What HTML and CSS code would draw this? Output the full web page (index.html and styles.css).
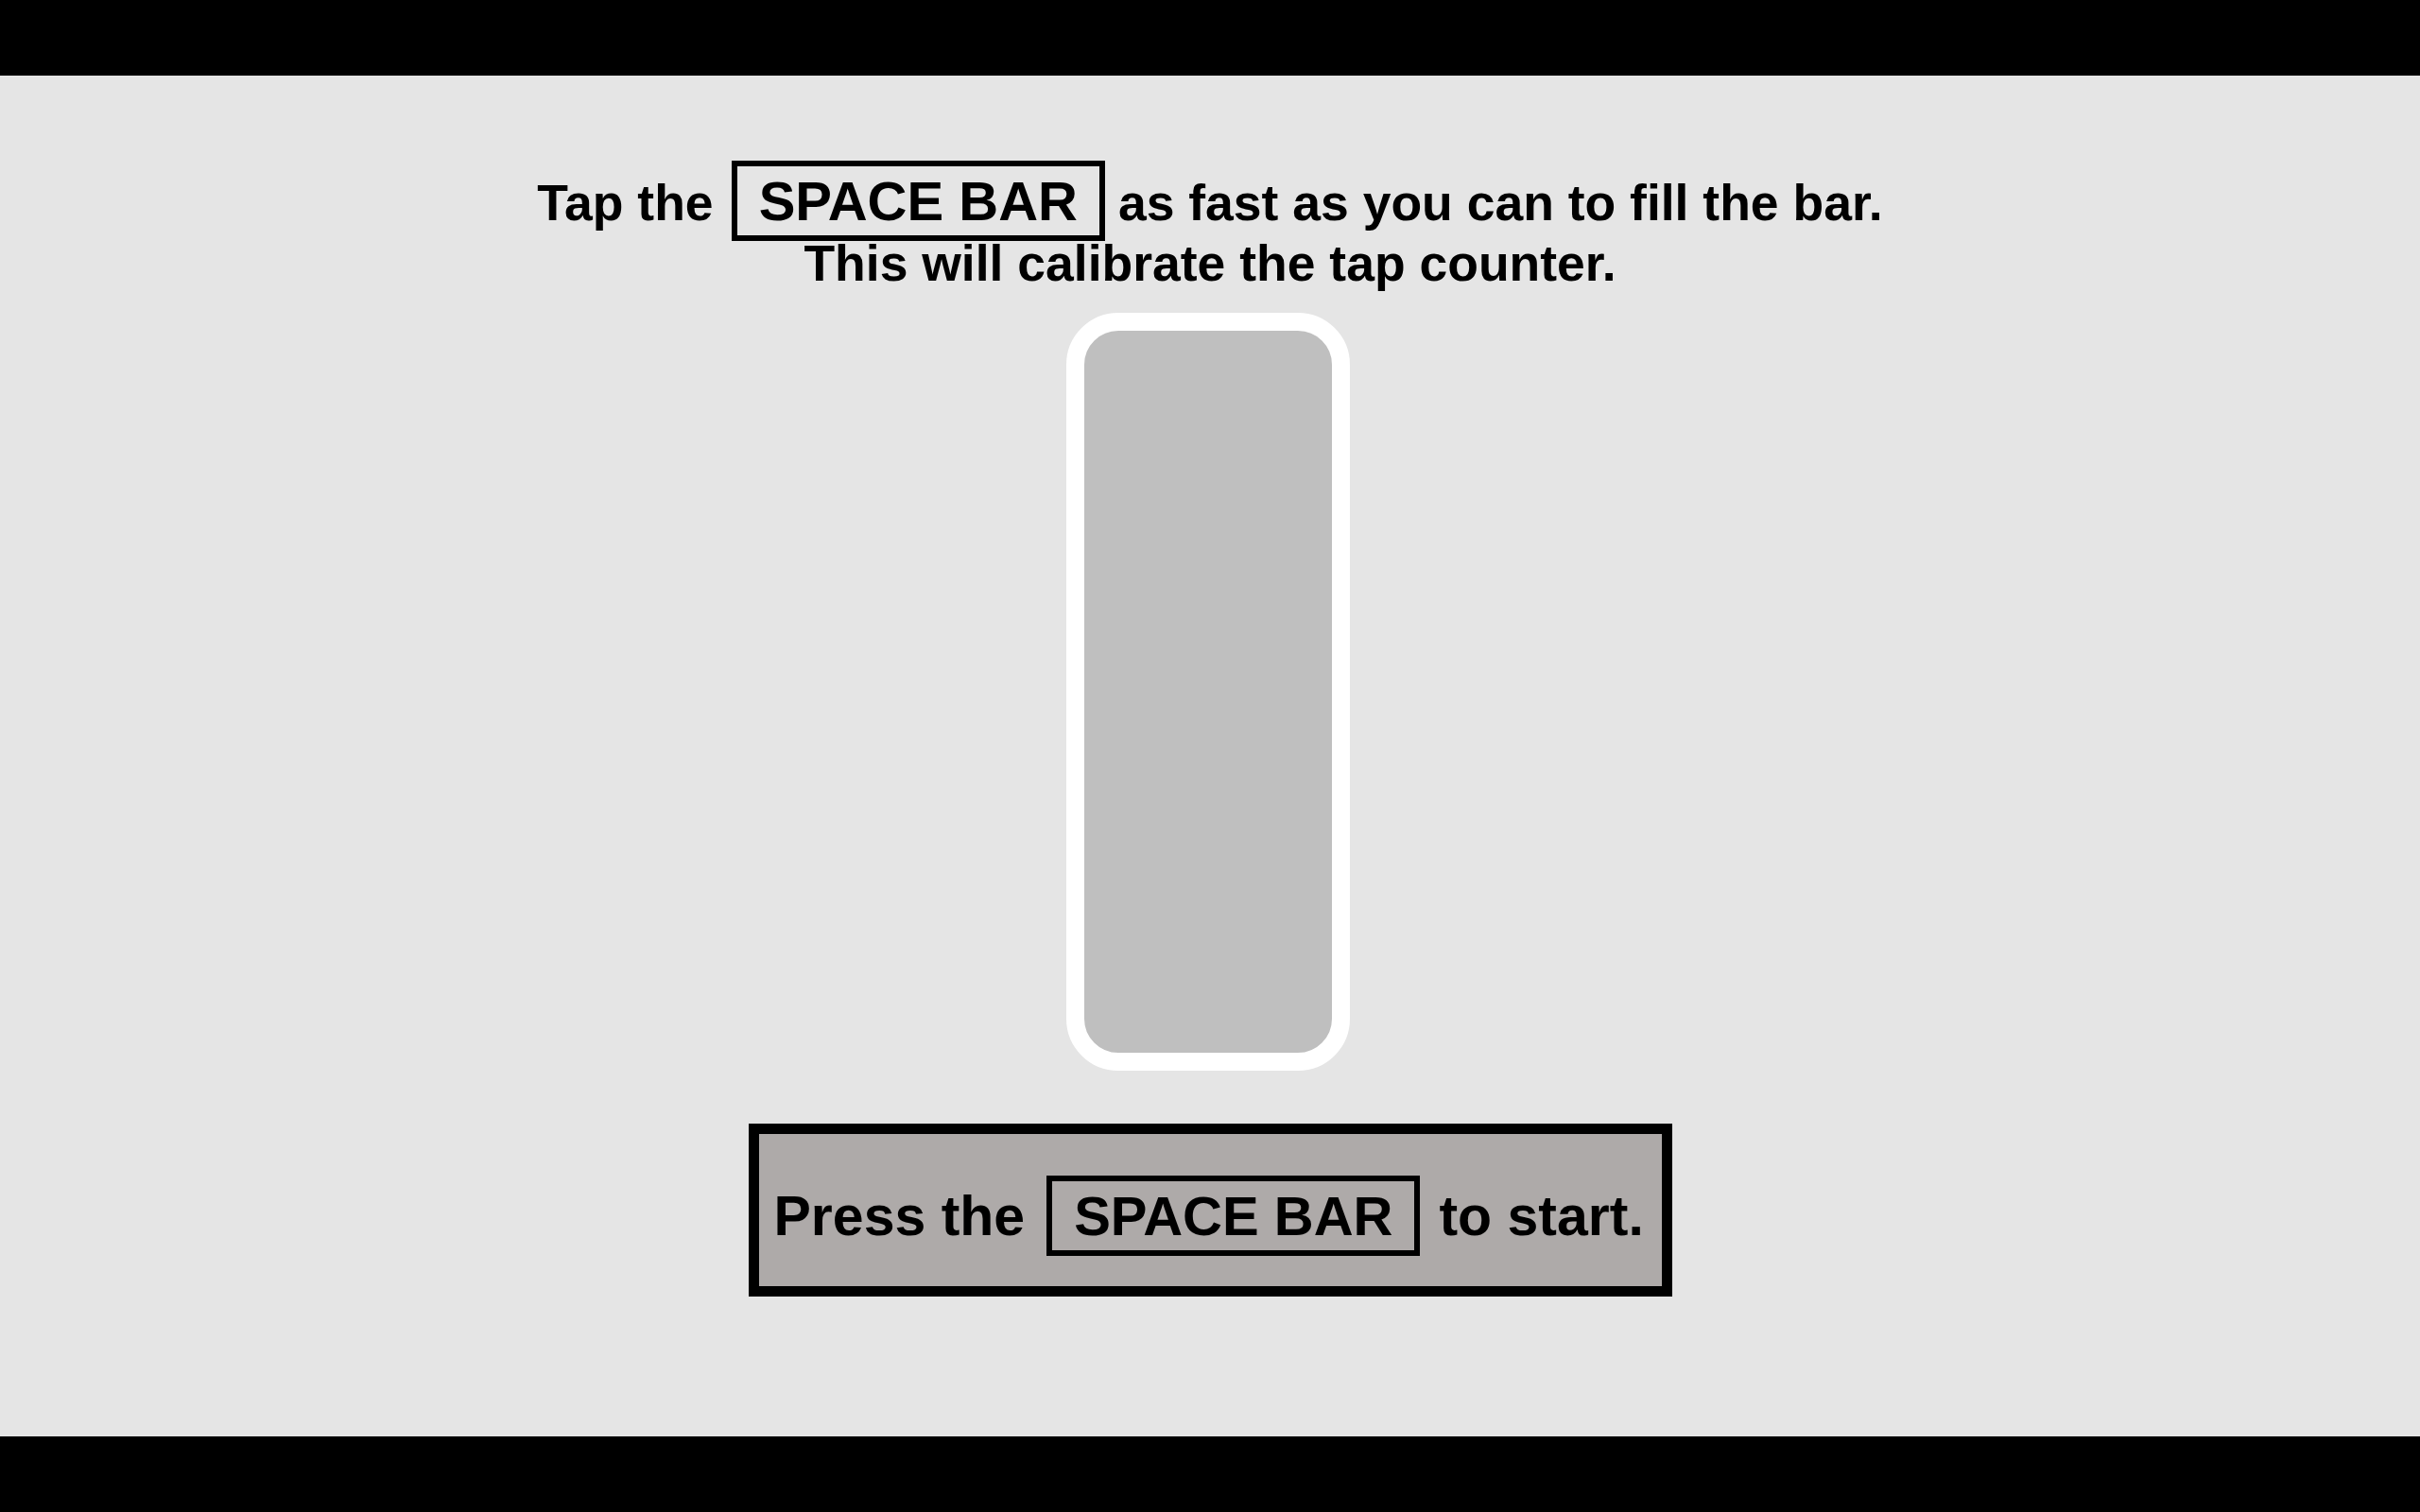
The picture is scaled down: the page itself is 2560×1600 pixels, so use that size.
FILE: index.html
```html
<!DOCTYPE html>
<html lang="en">
<head>
<meta charset="utf-8">
<title>Tap calibration</title>
<link rel="stylesheet" href="styles.css">
</head>
<body>
<div class="letterbox"></div>
<main class="stage">
  <div class="instruction">
    <div class="line-first">
      <span class="txt">Tap the</span>
      <span class="key key-inline">SPACE BAR</span>
      <span class="txt">as fast as you can to fill the bar.</span>
    </div>
    <div class="line-second">This will calibrate the tap counter.</div>
  </div>
  <div class="meter"></div>
  <div class="prompt">
    <span class="txt">Press the</span>
    <span class="key key-prompt">SPACE BAR</span>
    <span class="txt">to start.</span>
  </div>
</main>
<div class="letterbox"></div>
</body>
</html>
```

FILE: styles.css
```css
html, body {
  margin: 0;
  padding: 0;
}

body {
  background: #000;
  color: #000;
  font-family: "Liberation Sans", Arial, sans-serif;
  font-weight: bold;
}

.letterbox {
  height: 80px;
  background: #000;
}

.stage {
  height: 1440px;
  box-sizing: border-box;
  background: #e5e5e5;
  display: flex;
  flex-direction: column;
  align-items: center;
  padding-top: 90px;
}

.instruction {
  display: flex;
  flex-direction: column;
  align-items: center;
}

.line-first {
  display: flex;
  align-items: baseline;
  font-size: 53.5px;
  line-height: 65px;
  white-space: nowrap;
}

.line-second {
  font-size: 53.5px;
  line-height: 47px;
  white-space: nowrap;
}

.key {
  display: block;
  font-size: 58px;
  line-height: 65px;
  border: 6px solid #000;
  padding: 4px 23px;
  white-space: nowrap;
}

.key-inline {
  margin: 0 14px 0 19px;
}

.meter {
  margin-top: 29px;
  margin-right: 5px;
  width: 300px;
  height: 802px;
  box-sizing: border-box;
  border: 19px solid #fff;
  border-radius: 55px;
  background: #bfbfbf;
}

.prompt {
  margin-top: 56px;
  width: 977px;
  height: 183px;
  box-sizing: border-box;
  border: 11px solid #000;
  background: #aeaaa9;
  display: flex;
  align-items: baseline;
  padding: 44px 0 0 16px;
  font-size: 59px;
  line-height: 65px;
  white-space: nowrap;
}

.key-prompt {
  margin: 0 20px 0 23px;
}
```
